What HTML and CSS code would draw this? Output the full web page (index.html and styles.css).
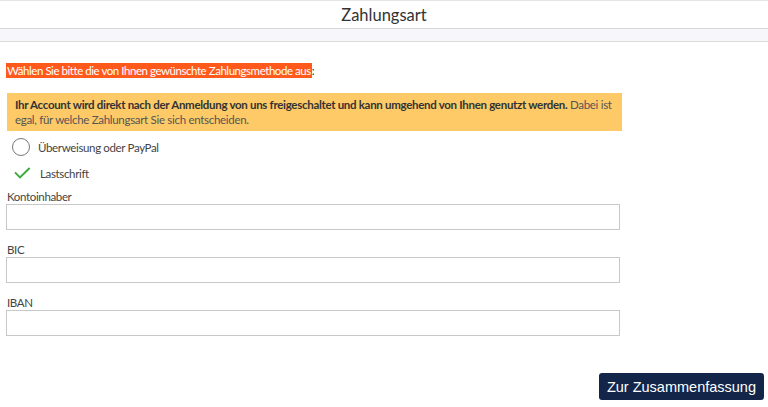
FILE: index.html
```html
<!DOCTYPE html>
<html lang="de">
<head>
<meta charset="utf-8">
<title>Zahlungsart</title>
<link rel="stylesheet" href="styles.css">
</head>
<body>
<header class="topbar"><h1 class="title">Zahlungsart</h1></header>
<div class="band"></div>
<main class="content">
  <p class="intro"><span class="mark">Wählen Sie bitte die von Ihnen gewünschte Zahlungsmethode aus</span>:</p>
  <div class="notice"><strong>Ihr Account wird direkt nach der Anmeldung von uns freigeschaltet und kann umgehend von Ihnen genutzt werden. </strong>Dabei ist egal, für welche Zahlungsart Sie sich entscheiden.</div>
  <div class="options">
    <div class="option"><span class="radio"></span><span class="opt-label">Überweisung oder PayPal</span></div>
    <div class="option"><svg class="check" width="17" height="12" viewBox="0 0 17 12"><path d="M1 5.4 L6 10.4 L15.6 1" fill="none" stroke="#3cab3c" stroke-width="2"/></svg><span class="opt-label">Lastschrift</span></div>
  </div>
  <div class="field"><label class="label">Kontoinhaber</label><div class="input"></div></div>
  <div class="field"><label class="label">BIC</label><div class="input"></div></div>
  <div class="field"><label class="label">IBAN</label><div class="input"></div></div>
  <div class="actions"><button class="btn">Zur Zusammenfassung</button></div>
</main>
</body>
</html>
```
FILE: styles.css
```css
html, body { margin: 0; padding: 0; background: #fff; }
body { font-family: Lato, "Open Sans", sans-serif; color: #333; font-size: 11.5px; letter-spacing: -0.35px; width: 768px; height: 407px; overflow: hidden; }
.topbar { height: 27px; border-top: 1px solid #e6e6e6; border-bottom: 1px solid #d6d6d6; display: flex; align-items: center; justify-content: center; }
.title { margin: 0; font-size: 16.5px; font-weight: 400; color: #333; letter-spacing: 0; }
.band { height: 12px; background: #f7f7fb; border-bottom: 1px solid #dcdcdc; }
.content { padding: 0 4px 0 6px; }
.intro { margin: 21px 0 0 0; line-height: 15px; color: #222; letter-spacing: -0.45px; }
.mark { background: #ff5a1c; color: #fff; padding: 1px 1px 1px 1px; }
.notice { margin: 15px 0 0 1px; width: 599px; background: #fdca67; color: #555; padding: 4px 8px 4px 8px; line-height: 15px; letter-spacing: -0.3px; }
.notice strong { color: #333; font-weight: 700; }
.options { margin-top: 6px; display: flex; flex-direction: column; gap: 6px; }
.option { display: flex; align-items: center; height: 20px; }
.radio { border: 1.5px solid #777; border-radius: 50%; margin: 0 8px 0 6px; box-sizing: border-box; width: 18px; height: 18px; }
.check { margin: 0 9px 0 8px; }
.opt-label { color: #444; }
.field { margin-top: 7px; display: flex; flex-direction: column; }
.field + .field { margin-top: 13px; }
.label { color: #444; line-height: 14px; margin-bottom: 0; padding-left: 1px; }
.input { width: 612px; height: 24px; border: 1px solid #c8c8c8; }
.actions { display: flex; justify-content: flex-end; margin-top: 37px; }
.btn { background: #13264a; color: #fff; border: 0; border-radius: 3px; font-family: "Liberation Sans", Arial, sans-serif; font-size: 14.5px; letter-spacing: 0; height: 27px; padding: 0 8px; }
```
